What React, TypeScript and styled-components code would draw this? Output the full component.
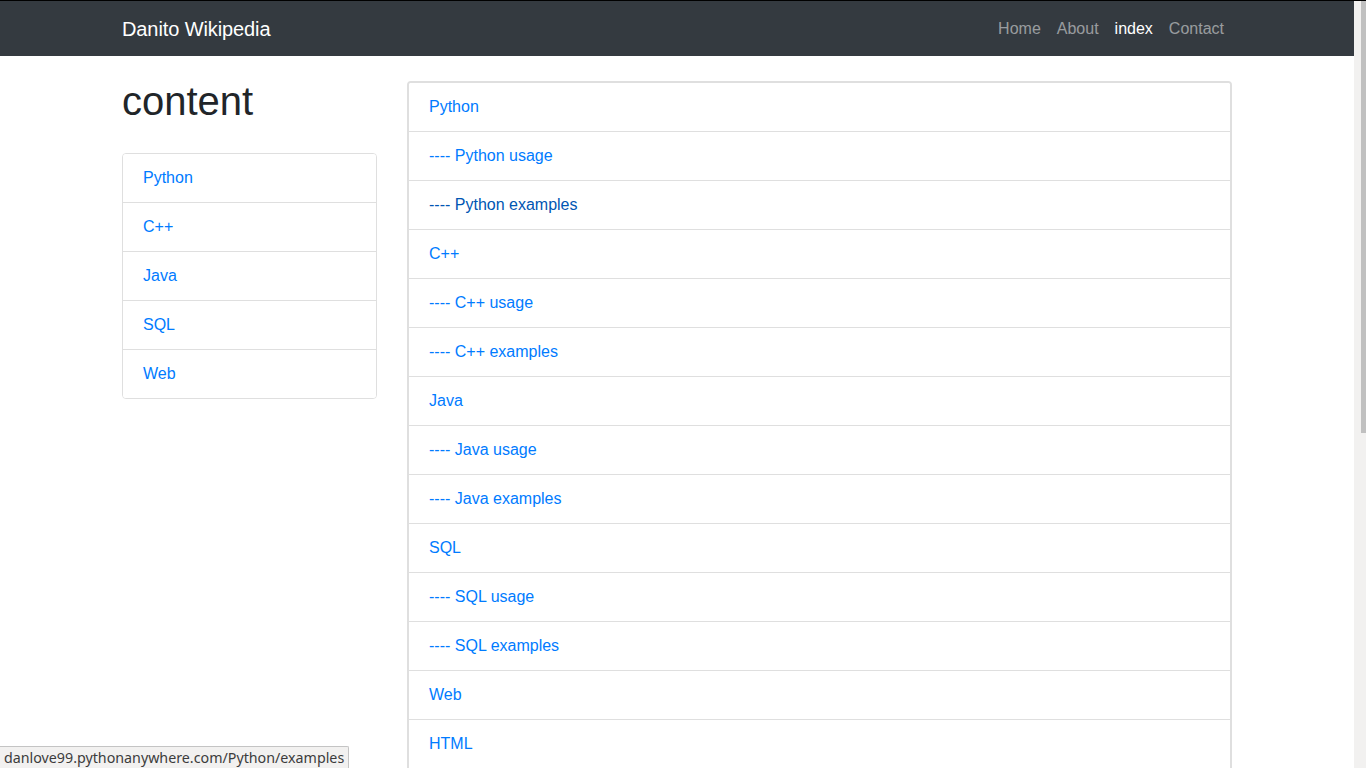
import React from "react";
import styled, { createGlobalStyle } from "styled-components";

const GlobalStyle = createGlobalStyle`
  html, body {
    margin: 0;
    padding: 0;
    overflow: hidden;
    background: #fff;
  }
  body {
    font-family: "Liberation Sans", Arial, sans-serif;
    font-size: 16px;
    line-height: 1.5;
    color: #212529;
  }
  * { box-sizing: border-box; }
`;

const Screen = styled.div`
  display: flex;
  height: 100vh;
  border-top: 1px solid #000;
`;

const Viewport = styled.div`
  flex: 1;
  min-width: 0;
  overflow: hidden;
`;

const ScrollTrack = styled.div`
  width: 12px;
  flex: none;
  background: #f2f1f0;
  display: flex;
  justify-content: flex-end;
  align-items: flex-start;
`;

const ScrollThumb = styled.div`
  width: 5px;
  height: 432px;
  background: #c0c0c0;
`;

const Navbar = styled.nav`
  height: 55px;
  background: #343a40;
`;

const Container = styled.div`
  width: 1140px;
  margin: 0 auto;
  padding: 0 15px;
`;

const NavInner = styled(Container)`
  height: 100%;
  display: flex;
  align-items: center;
  justify-content: space-between;
`;

const Brand = styled.a`
  color: #fff;
  font-size: 20px;
  line-height: 30px;
  text-decoration: none;
  letter-spacing: -0.1px;
`;

const NavLinks = styled.div`
  display: flex;
  margin-right: 0;
`;

const NavLink = styled.a<{ $active?: boolean }>`
  padding: 8px;
  line-height: 24px;
  font-size: 16px;
  text-decoration: none;
  color: ${(p) => (p.$active ? "#fff" : "rgba(255, 255, 255, 0.5)")};
`;

const Row = styled(Container)`
  display: grid;
  grid-template-columns: 255px 825px;
  column-gap: 30px;
  align-items: start;
`;

const Sidebar = styled.div``;

const Title = styled.h1`
  margin: 21px 0 28px;
  font-size: 40px;
  line-height: 48px;
  font-weight: 500;
  color: #212529;
`;

const ListGroup = styled.div<{ $thick?: boolean }>`
  display: flex;
  flex-direction: column;
  border: ${(p) => (p.$thick ? 2 : 1)}px solid #dfdfdf;
  border-radius: 4px;
  overflow: hidden;
`;

const Main = styled.div`
  padding-top: 25px;
`;

const ListItem = styled.a<{ $dark?: boolean }>`
  display: block;
  padding: 12px 20px;
  line-height: 24px;
  font-size: 16px;
  text-decoration: none;
  background: #fff;
  color: ${(p) => (p.$dark ? "#0056b3" : "#007bff")};
  & + & {
    border-top: 1px solid #dfdfdf;
  }
`;

const StatusBar = styled.div`
  position: fixed;
  left: 0;
  bottom: 0;
  height: 22px;
  padding: 0 4px;
  background: #f2f1f0;
  border-top: 1px solid #c4c4c4;
  border-right: 1px solid #c4c4c4;
  border-top-right-radius: 2px;
  font-family: "Noto Sans", "DejaVu Sans", sans-serif;
  font-size: 14.25px;
  line-height: 21px;
  color: #3c3c3c;
  white-space: nowrap;
`;

const sideItems = ["Python", "C++", "Java", "SQL", "Web"];

const mainItems = [
  "Python",
  "---- Python usage",
  "---- Python examples",
  "C++",
  "---- C++ usage",
  "---- C++ examples",
  "Java",
  "---- Java usage",
  "---- Java examples",
  "SQL",
  "---- SQL usage",
  "---- SQL examples",
  "Web",
  "HTML",
  "---- HTML usage",
  "---- HTML examples",
  "CSS",
  "---- CSS usage",
  "---- CSS examples",
  "JavaScript",
  "---- JavaScript usage",
  "---- JavaScript examples",
];

export default function App() {
  return (
    <>
      <GlobalStyle />
      <Screen>
        <Viewport>
          <Navbar>
            <NavInner>
              <Brand href="#">Danito Wikipedia</Brand>
              <NavLinks>
                <NavLink href="#">Home</NavLink>
                <NavLink href="#">About</NavLink>
                <NavLink href="#" $active>
                  index
                </NavLink>
                <NavLink href="#">Contact</NavLink>
              </NavLinks>
            </NavInner>
          </Navbar>
          <Row>
            <Sidebar>
              <Title>content</Title>
              <ListGroup>
                {sideItems.map((s) => (
                  <ListItem key={s} href="#">
                    {s}
                  </ListItem>
                ))}
              </ListGroup>
            </Sidebar>
            <Main>
              <ListGroup $thick>
                {mainItems.map((s) => (
                  <ListItem key={s} href="#" $dark={s === "---- Python examples"}>
                    {s}
                  </ListItem>
                ))}
              </ListGroup>
            </Main>
          </Row>
        </Viewport>
        <ScrollTrack>
          <ScrollThumb />
        </ScrollTrack>
      </Screen>
      <StatusBar>danlove99.pythonanywhere.com/Python/examples</StatusBar>
    </>
  );
}
